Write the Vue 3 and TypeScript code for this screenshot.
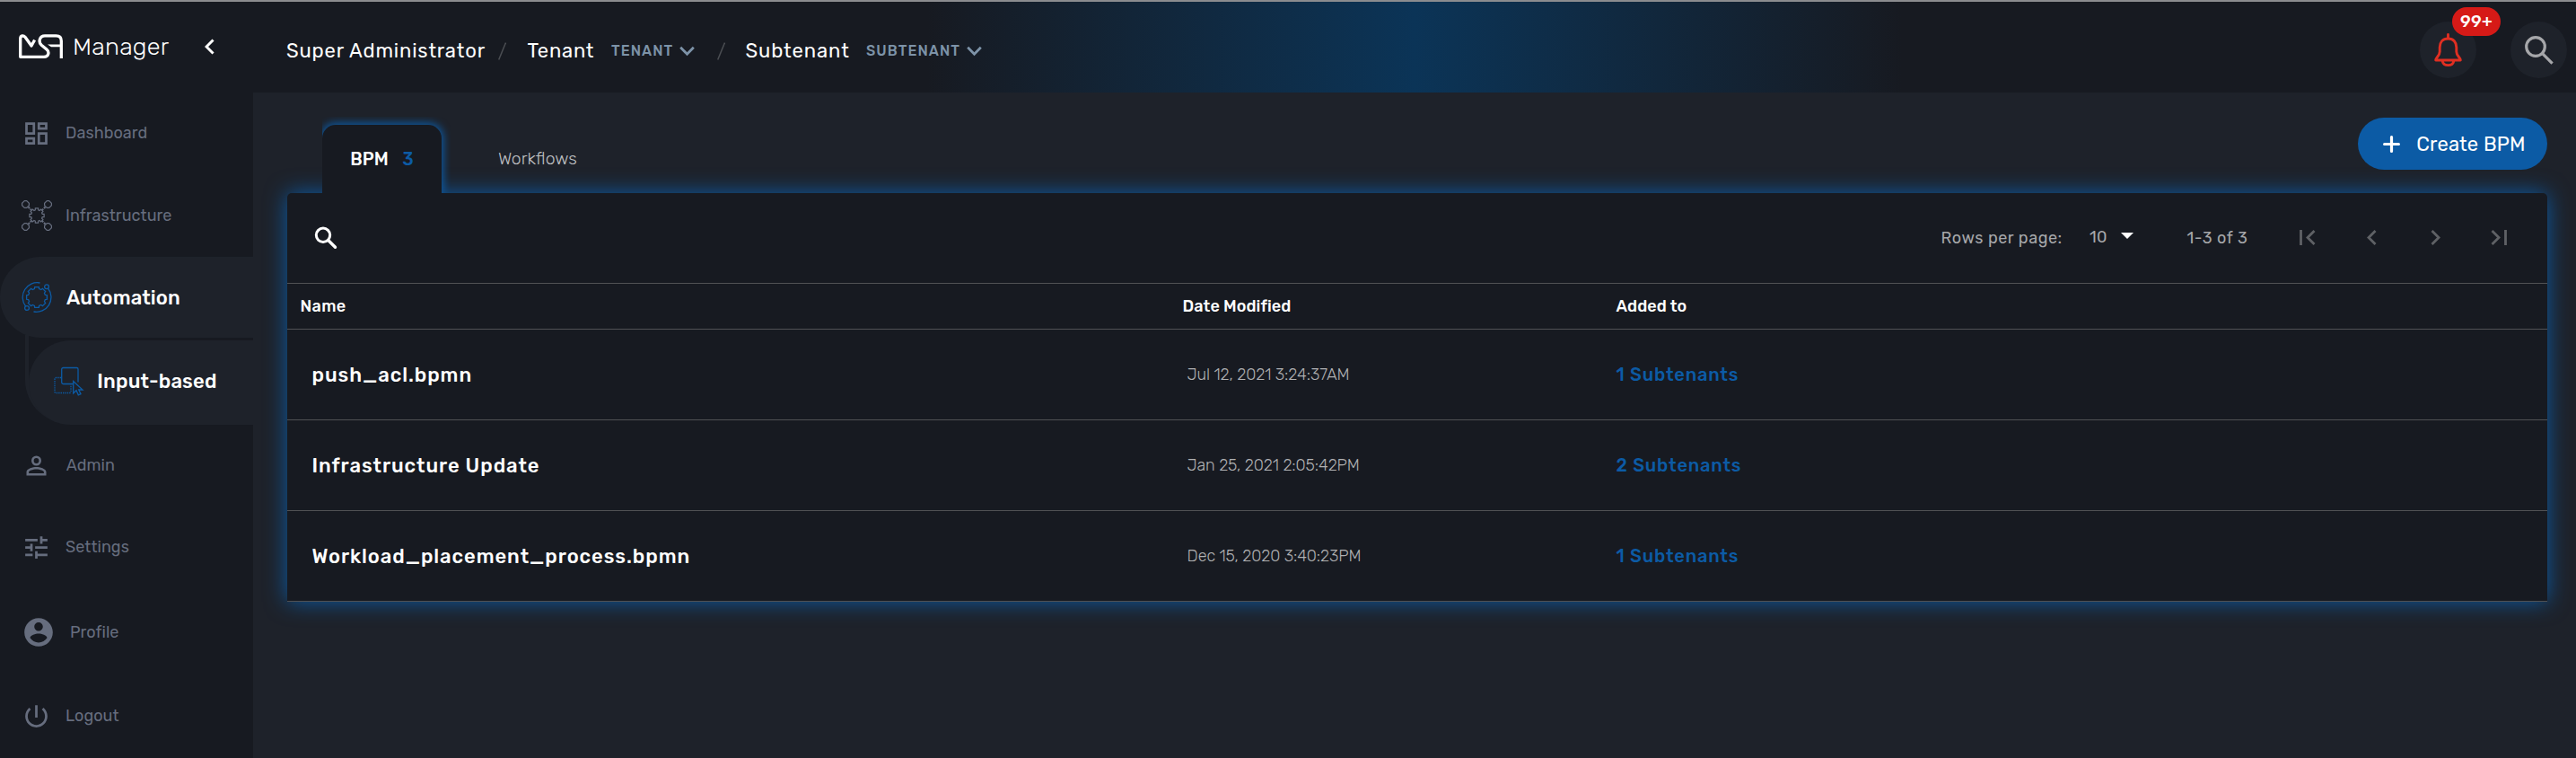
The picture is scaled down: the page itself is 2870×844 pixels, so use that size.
<script setup lang="ts">
interface NavItem { id: string; label: string; size: number; path: string }
interface Bpm { name: string; modified: string; subtenants: number }

const footerNav: NavItem[] = [
  { id: 'admin', label: 'Admin', size: 33, path: 'M12,4A4,4 0 0,1 16,8A4,4 0 0,1 12,12A4,4 0 0,1 8,8A4,4 0 0,1 12,4M12,5.9A2.1,2.1 0 0,0 9.9,8A2.1,2.1 0 0,0 12,10.1A2.1,2.1 0 0,0 14.1,8A2.1,2.1 0 0,0 12,5.9M12,13C14.67,13 20,14.33 20,17V20H4V17C4,14.33 9.33,13 12,13M12,14.9C9.03,14.9 5.9,16.36 5.9,17V18.1H18.1V17C18.1,16.36 14.97,14.9 12,14.9Z' },
  { id: 'settings', label: 'Settings', size: 33, path: 'M3,17V19H9V17H3M3,5V7H13V5H3M13,21V19H21V17H13V15H11V21H13M7,9V11H3V13H7V15H9V9H7M21,13V11H11V13H21M15,9H17V7H21V5H17V3H15V9Z' },
  { id: 'profile', label: 'Profile', size: 38, path: 'M12 2C6.48 2 2 6.48 2 12s4.48 10 10 10 10-4.48 10-10S17.52 2 12 2zm0 3c1.66 0 3 1.34 3 3s-1.34 3-3 3-3-1.34-3-3 1.34-3 3-3zm0 14.2c-2.5 0-4.71-1.28-6-3.22.03-1.99 4-3.08 6-3.08 1.99 0 5.97 1.09 6 3.08-1.29 1.94-3.5 3.22-6 3.22z' },
  { id: 'logout', label: 'Logout', size: 33, path: 'M13 3h-2v10h2V3zm4.83 2.17l-1.42 1.42C17.99 7.86 19 9.81 19 12c0 3.87-3.13 7-7 7s-7-3.13-7-7c0-2.19 1.01-4.14 2.58-5.42L6.17 5.17C4.23 6.82 3 9.26 3 12c0 4.97 4.03 9 9 9s9-4.03 9-9c0-2.74-1.23-5.18-3.17-6.83z' },
]

const rows: Bpm[] = [
  { name: 'push_acl.bpmn', modified: 'Jul 12, 2021 3:24:37AM', subtenants: 1 },
  { name: 'Infrastructure Update', modified: 'Jan 25, 2021 2:05:42PM', subtenants: 2 },
  { name: 'Workload_placement_process.bpmn', modified: 'Dec 15, 2020 3:40:23PM', subtenants: 1 },
]

/** Outline of an eight-toothed gear centred in a 34-unit box. */
function gear(outer: number, inner: number): string {
  const pts: string[] = []
  const step = Math.PI / 4
  for (let i = 0; i < 8; i++) {
    const a = i * step
    const corners: [number, number][] = [[-0.27, inner], [-0.2, outer], [0.2, outer], [0.27, inner]]
    for (const [d, r] of corners) {
      pts.push(`${(17 + r * Math.cos(a + d)).toFixed(2)} ${(17 + r * Math.sin(a + d)).toFixed(2)}`)
    }
  }
  return `M${pts.join('L')}Z`
}
const smallGear = gear(8.3, 6.4)
const bigGear = gear(11.6, 9.7)
const corners = [[4.5, 4.5], [29.5, 4.5], [4.5, 29.5], [29.5, 29.5]]
</script>

<template>
  <div class="app">
    <div class="strip"></div>
    <div class="body">
      <aside class="sidebar">
        <div class="brand">
          <svg class="logo" width="49" height="27" viewBox="0 0 49 27" fill="none" stroke="#fff" stroke-width="3.3">
            <path d="M17.6 6.5L14 13L7 3.3Q5.6 1.6 3.9 1.8Q1.7 2.3 1.7 5V25.3H28C33.5 25.3 34.2 19.6 31 17L25.2 12.2C21.4 8.8 23 1.8 29 1.8H41.5Q47.3 1.8 47.3 7.5V27" stroke-linejoin="round" />
            <path d="M32 11.600H46.500V14.200H36Z" fill="#fff" stroke="none" />
          </svg>
          <span class="brand-name">Manager</span>
          <svg width="11" height="18" viewBox="0 0 11 18" fill="none" stroke="#fff" stroke-width="3"><path d="M9.5 1.5L2 9L9.5 16.5" /></svg>
        </div>
        <nav>
          <a class="item dashboard">
            <svg width="33" height="33" viewBox="0 0 24 24" fill="currentColor"><path d="M19,5V7H15V5H19M9,5V11H5V5H9M19,13V19H15V13H19M9,17V19H5V17H9M21,3H13V9H21V3M11,3H3V13H11V3M21,11H13V21H21V11M11,15H3V21H11V15Z" /></svg>
            <span>Dashboard</span>
          </a>
          <a class="item infra">
            <svg width="34" height="34" viewBox="0 0 34 34" fill="none" stroke="currentColor" stroke-width="1.2">
              <path :d="smallGear" />
              <path v-for="(c, i) in corners" :key="i" :d="`M${c[0] - 1.2} ${c[1] - 3.9}h2.4l2.7 2.7v2.4l-2.7 2.7h-2.4l-2.7-2.7v-2.4z`" />
              <path d="M7.5 7.5l4 4M26.5 7.5l-4 4M7.5 26.5l4-4M26.5 26.5l-4-4" stroke-width="2" stroke-dasharray="2.2 1" />
            </svg>
            <span>Infrastructure</span>
          </a>
          <a class="item active">
            <svg width="34" height="34" viewBox="0 0 34 34" fill="none" stroke="#0c5ba5" stroke-width="1.3">
              <path :d="bigGear" />
              <path d="M20.5 1A16.3 16.3 0 0 0 4.6 27M29.5 7A16.3 16.3 0 0 1 13.5 33" />
              <circle cx="28" cy="5.3" r="2.4" /><circle cx="6" cy="29" r="2.4" />
            </svg>
            <span>Automation</span>
          </a>
          <div class="branch">
            <a class="item sub">
              <svg width="34" height="34" viewBox="0 0 34 34" fill="none" stroke="#0c5ba5" stroke-width="1.3">
                <path d="M8 12.5H2.5Q1 12.5 1 14V28Q1 29.5 2.5 29.5H17.5Q19 29.5 19 28V20.5" stroke-dasharray="1.4 1" />
                <path d="M21.5 19.5H10.5Q8.7 19.5 8.7 17.7V3Q8.7 1.5 10.5 1.5H25.5Q27 1.5 27 3V17.5" />
                <path d="M21.7 16.5V30L25 26.7L27.3 31.8L30 30.6L27.7 26H32Z" />
              </svg>
              <span>Input-based</span>
            </a>
          </div>
          <a v-for="n in footerNav" :key="n.id" class="item" :class="n.id">
            <svg :width="n.size" :height="n.size" viewBox="0 0 24 24" fill="currentColor"><path :d="n.path" /></svg>
            <span>{{ n.label }}</span>
          </a>
        </nav>
      </aside>

      <div class="main">
        <header class="header">
          <div class="crumbs">
            <span class="crumb admin-crumb">Super Administrator</span>
            <svg class="slash" width="9" height="20" viewBox="0 0 9 20"><path d="M8.5 .5L.7 19.5" stroke="#4b4e53" stroke-width="1.5" /></svg>
            <span class="crumb tenant">Tenant</span>
            <span class="picker tenant-picker">TENANT</span>
            <svg width="17" height="12" viewBox="0 0 17 12" fill="none" stroke="#7d93a8" stroke-width="2.8"><path d="M1.2 1.7L8.5 9.2L15.8 1.7" /></svg>
            <svg class="slash second" width="9" height="20" viewBox="0 0 9 20"><path d="M8.5 .5L.7 19.5" stroke="#4b4e53" stroke-width="1.5" /></svg>
            <span class="crumb subtenant">Subtenant</span>
            <span class="picker subtenant-picker">SUBTENANT</span>
            <svg width="17" height="12" viewBox="0 0 17 12" fill="none" stroke="#7d93a8" stroke-width="2.8"><path d="M1.2 1.7L8.5 9.2L15.8 1.7" /></svg>
          </div>
          <div class="actions">
            <button class="round">
              <svg width="31" height="38" viewBox="0 0 31 38" fill="none" stroke="#e02f22" stroke-width="2.9" stroke-linejoin="round" stroke-linecap="round">
                <path d="M15.5 1.5V5.5M15.5 6C9.5 6 6.2 10.3 6.2 15.8V20.5C6.2 25.5 1.7 27 1.7 30H29.3C29.3 27 24.8 25.5 24.8 20.5V15.8C24.8 10.3 21.5 6 15.5 6ZM9.3 31.5A6.3 5 0 0 0 21.7 31.5" />
              </svg>
              <span class="badge">99+</span>
            </button>
            <button class="round">
              <svg width="32" height="32" viewBox="0 0 32 32" fill="none" stroke="#a6a7aa" stroke-width="3.2"><circle cx="12" cy="12" r="10.3" /><path d="M19.4 19.4L30.6 30.6" /></svg>
            </button>
          </div>
        </header>

        <section class="content">
          <div class="tabs-row">
            <div class="tab-clip"><div class="tab"><span class="tab-label">BPM</span><span class="count">3</span></div></div>
            <div class="tab-idle">Workflows</div>
            <button class="create">
              <svg width="19" height="19" viewBox="0 0 19 19" stroke="#fff" stroke-width="3.2" stroke-linecap="round"><path d="M9.5 1.6V17.4M1.6 9.5H17.4" /></svg>
              <span>Create BPM</span>
            </button>
          </div>

          <div class="panel">
            <div class="toolbar">
              <svg width="26" height="26" viewBox="0 0 26 26" fill="none" stroke="#fff" stroke-width="3"><circle cx="10" cy="9.8" r="7.7" /><path d="M15.7 15.5L23.5 23.3" stroke-width="3.4" stroke-linecap="round" /></svg>
              <div class="pager">
                <span class="rpp">Rows per page:</span>
                <span class="ten">10</span>
                <svg class="tri" width="14" height="7" viewBox="0 0 14 7"><path d="M0 0H14L7 7Z" fill="#fff" /></svg>
                <span class="range">1-3 of 3</span>
                <span class="pg"><svg width="18" height="17" viewBox="0 0 18 17"><path d="M1.5 0V17M16.5 1L9 8.5L16.5 16" /></svg></span>
                <span class="pg"><svg width="11" height="17" viewBox="0 0 11 17"><path d="M9.5 1L2 8.5L9.5 16" /></svg></span>
                <span class="pg"><svg width="11" height="17" viewBox="0 0 11 17"><path d="M1.5 1L9 8.5L1.5 16" /></svg></span>
                <span class="pg"><svg width="18" height="17" viewBox="0 0 18 17"><path d="M16.5 0V17M1.5 1L9 8.5L1.5 16" /></svg></span>
              </div>
            </div>
            <div class="row head">
              <span class="h-name">Name</span><span>Date Modified</span><span>Added to</span>
            </div>
            <div v-for="r in rows" :key="r.name" class="row">
              <span class="name">{{ r.name }}</span>
              <span class="date">{{ r.modified }}</span>
              <a class="link">{{ r.subtenants }} Subtenants</a>
            </div>
          </div>
        </section>
      </div>
    </div>
  </div>
</template>

<style>
body { background: #1e222a; }
</style>

<style scoped>
.app { font-family: Rubik, Roboto, "Liberation Sans", sans-serif; height: 844px; overflow: hidden; background: #1e222a; color: #fff; white-space: nowrap; }
.app svg { display: block; flex: none; }
.strip { height: 2px; background: #8b8c8f; }
.body { display: flex; height: 842px; }
.sidebar { width: 282px; background: #171a21; flex: none; }
.brand { display: flex; height: 100px; box-sizing: border-box; padding: 0 0 0 21px; align-items: center; }
.brand .logo { margin-bottom: 1px; }
.brand-name { font-size: 27px; font-weight: 300; letter-spacing: .23px; width: 147px; margin-left: 11px; }
.item { display: flex; align-items: center; height: 91px; padding-left: 24px; box-sizing: border-box; color: #666d7e; font-size: 18px; letter-spacing: .05px; }
.item span { margin: -1px 0 0 16px; }
.dashboard, .infra { height: 92px; }
.infra span { margin-left: 15px; }
.active { height: 90px; background: #1e222a; border-radius: 45px 0 0 45px; color: #fff; font-size: 22px; font-weight: 500; letter-spacing: .12px; }
.active span { margin-top: 0; }
.branch { margin: -3px 0 0 28px; padding-top: 6px; border-left: 4px solid #1e222a; border-bottom-left-radius: 52px 50px; }
.sub { height: 94px; padding: 0 0 3px 28px; background: #1e222a; border-radius: 48px 0 0 48px; color: #fff; font-size: 22px; font-weight: 500; letter-spacing: .18px; }
.sub span { margin: 0 0 0 14.3px; }
.admin span { margin-left: 16.7px; }
.profile { height: 98px; }
.logout { height: 89px; }
.main { flex: 1; min-width: 0; }
.header { height: 101px; display: flex; justify-content: space-between; background: linear-gradient(90deg, #171a21 29%, #0b3457 50%, #171a21 71%); }
.crumbs { display: flex; align-items: center; padding: 8px 0 0 37px; }
.crumb { font-size: 22px; letter-spacing: .84px; }
.admin-crumb { width: 236px; }
.slash { margin-right: 23.5px; }
.slash.second { margin: 0 22.5px 0 25px; }
.tenant { width: 93.5px; letter-spacing: .74px; }
.subtenant { width: 134.5px; letter-spacing: .9px; }
.picker { font-size: 16px; font-weight: 500; letter-spacing: 1.05px; color: #7d93a8; }
.tenant-picker { width: 76px; }
.subtenant-picker { width: 112px; }
.actions { display: flex; gap: 38px; padding: 22px 10px 0 0; }
.round { position: relative; width: 63px; height: 63px; border: 0; border-radius: 50%; background: #1e222a; padding: 0; display: flex; align-items: center; justify-content: center; }
.badge { position: absolute; left: 36px; top: -16px; width: 54px; height: 32px; box-sizing: border-box; border-radius: 16px; background: #d61a17; color: #fff; font: 500 19px/32px Rubik, Roboto, sans-serif; letter-spacing: .3px; text-align: center; }
.content { padding: 0 32px 0 38px; }
.tabs-row { display: flex; align-items: flex-end; height: 112px; position: relative; z-index: 1; }
.tab-clip { margin-left: 39px; overflow: hidden; padding: 9px 10px 0 0; }
.tab { display: flex; align-items: center; width: 133px; height: 76px; box-sizing: border-box; padding-left: 31.3px; background: #171a21; border-radius: 15px 15px 0 0; box-shadow: 0 0 10px 2px #0c5ba5; font-size: 19.7px; font-weight: 500; }
.tab-label { width: 58px; }
.count { color: #0c5ba5; }
.tab-idle { margin-left: 53px; line-height: 76px; font-size: 19.4px; font-weight: 300; color: #c0c1c4; }
.create { margin-left: auto; margin-bottom: 26px; width: 211px; height: 58px; border: 0; border-radius: 29px; background: #0c5ba5; color: #fff; display: flex; align-items: center; padding: 0 0 0 28px; font: 400 22px Rubik, Roboto, sans-serif; letter-spacing: .16px; }
.create span { margin-left: 18.3px; }
.panel { background: #171a21; border-radius: 5px 5px 0 0; box-shadow: 0 0 24px #0c5ba5; }
.toolbar { height: 101px; box-sizing: border-box; border-bottom: 1px solid #505154; display: flex; align-items: center; justify-content: space-between; padding: 0 18.5px 1px 30px; }
.pager { display: flex; align-items: center; font-size: 18px; letter-spacing: .57px; color: #a6a7aa; }
.rpp { width: 165.5px; }
.ten { width: 35px; margin-top: -1px; letter-spacing: .3px; }
.tri { margin: -4px 59.5px 0 0; }
.range { width: 99px; }
.pg { width: 71px; display: flex; justify-content: center; }
.pg path { fill: none; stroke: #5f6165; stroke-width: 2.8; }
.row { display: grid; grid-template-columns: 997.6px 483px 1fr; align-items: center; height: 101px; box-sizing: border-box; border-bottom: 1px solid #505154; }
.head { height: 51px; font-size: 18px; font-weight: 500; letter-spacing: .08px; }
.h-name { padding-left: 14.6px; letter-spacing: .3px; }
.name { padding-left: 27.5px; font-size: 22px; font-weight: 500; letter-spacing: .93px; }
.date { padding-left: 5px; font-size: 18px; font-weight: 300; letter-spacing: -.1px; color: #b0b1b3; }
.link { font-size: 20px; font-weight: 500; letter-spacing: .81px; color: #0c5ba5; }
</style>
